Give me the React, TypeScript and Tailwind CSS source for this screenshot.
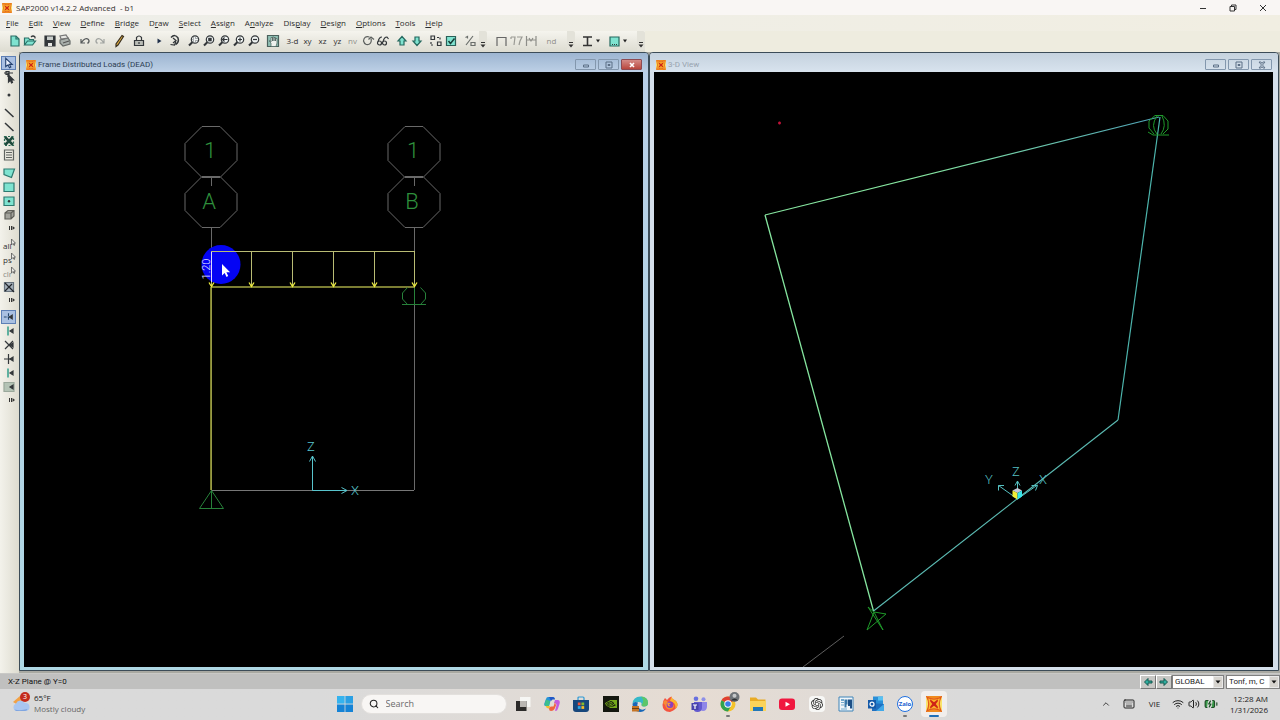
import type { ReactNode } from 'react'
import {
  BatteryCharging,
  ChevronUp,
  Keyboard,
  Search,
  Volume2,
  Wifi,
} from 'lucide-react'
import { SiNvidia, SiOpenai } from 'react-icons/si'
import { clsx } from 'clsx'

const INK = '#33373a'
const TEAL = '#2f9e8a'
const AQUA = '#7fe3d0'

function SapIcon({ className }: { className?: string }) {
  return (
    <svg viewBox="0 0 18 18" className={className} aria-hidden="true">
      <rect width="18" height="18" fill="#fae36a" />
      <path d="M0 0h18L12 3H6zM0 18h18l-6-3H6z" fill="#f08a1d" />
      <path d="M1 1Q9 6 17 1Q13 9 17 17Q9 12 1 17Q5 9 1 1Z" fill="#fbb52c" stroke="#e2581b" strokeWidth="1.3" />
      <path d="M5 4L9 7l4-3 .500 1.500L11 9l2.500 3.500L13 14l-4-3-4 3-.500-1.500L7 9 4.500 5.500z" fill="#cf2417" />
    </svg>
  )
}

function Glyph({ children }: { children: ReactNode }) {
  return (
    <svg viewBox="0 0 14 14" className="size-3.5" fill="none" stroke={INK} strokeWidth="1.2" aria-hidden="true">
      {children}
    </svg>
  )
}

function Lens({ children }: { children?: ReactNode }) {
  return (
    <Glyph>
      <circle cx="8" cy="5.5" r="3.7" fill="#eef2f1" />
      <path d="M5.3 8.2L2 11.5" strokeWidth="2" />
      {children}
    </Glyph>
  )
}

interface Tool {
  label: string
  icon?: ReactNode
  text?: string
  muted?: boolean
  active?: boolean
}

const FILE_TOOLS: Tool[][] = [
  [
    { label: 'New model', icon: <Glyph><path d="M3 2h5l3 3v7H3z" fill={AQUA} stroke="#2b6f66" /><path d="M8 2v3h3" stroke="#2b6f66" /></Glyph> },
    { label: 'Open', icon: <Glyph><path d="M1.5 11V4h4l1 1.500h4V7M1.500 11l3-4h8l-3 4z" fill={AQUA} stroke="#2b6f66" /><path d="M8 3q2-2 4 0v1.500" stroke={INK} /></Glyph> },
  ],
  [
    { label: 'Save', icon: <Glyph><path d="M2 2h10v10H2z" fill={INK} /><path d="M4 2.500h6V6H4z" fill="#c9cecb" stroke="none" /><path d="M5 9h4v3H5z" fill="#e8e8e4" stroke="none" /></Glyph> },
    { label: 'Print', icon: <Glyph><path d="M2 6l8-2 2 3v3l-7 2-3-3z" fill="#a9b0ac" stroke="#666b68" /><path d="M3 5l-1-3 6-1 2 3z" fill="#e8e8e4" stroke="#777" /><path d="M5 9l6-2" stroke="#555" /></Glyph> },
  ],
  [
    { label: 'Undo', icon: <Glyph><path d="M3 5v4h4M3.500 8.500Q7 3 10.500 5.500Q12 7.500 9.500 9.500" stroke="#55595a" /></Glyph> },
    { label: 'Redo', icon: <Glyph><path d="M11 5v4H7M10.500 8.500Q7 3 3.500 5.500Q2 7.500 4.500 9.500" stroke="#a0a3a0" /></Glyph> },
  ],
]

const EDIT_TOOLS: Tool[][] = [
  [{ label: 'Refresh window', icon: <Glyph><path d="M10 1.500l1.500 1L6 11l-2 1.500L4 10z" fill="#e8b33c" stroke="#3a3020" /></Glyph> }],
  [{ label: 'Lock model', icon: <Glyph><path d="M2.500 6.500h9v5h-9z" fill="#b9bcb6" /><path d="M4.500 6V3.500q2.500-3 5 0V6M7 8v2" /></Glyph> }],
  [
    { label: 'Run analysis', icon: <Glyph><path d="M5.500 4.500L9.500 7l-4 2.500z" fill="#20304a" stroke="none" /></Glyph> },
    { label: 'Run', icon: <Glyph><path d="M4 3.500Q8-.500 11 4Q12.500 8 8.500 10.500" strokeWidth="1.500" /><path d="M6 4l3 2.500L6 9M9 7.500L7.500 11l-4-.500" /></Glyph> },
  ],
  [
    { label: 'Rubber band zoom', icon: <Lens><path d="M6 4h4v3H6z" strokeWidth=".7" strokeDasharray="1 1" /></Lens> },
    { label: 'Restore full view', icon: <Lens><rect x="6.200" y="3.800" width="3.500" height="3.500" fill={INK} stroke="none" /></Lens> },
    { label: 'Restore previous zoom', icon: <Lens><path d="M5.500 5.500h5M7.500 3.500l-2 2 2 2" /></Lens> },
    { label: 'Zoom in', icon: <Lens><path d="M6 5.500h4M8 3.500v4" /></Lens> },
    { label: 'Zoom out', icon: <Lens><path d="M6 5.500h4" /></Lens> },
  ],
]

const PAN_TOOL: Tool[] = [
  { label: 'Pan', icon: <Glyph><path d="M1.500 1.500h11v11h-11z" fill="#8fc0b4" stroke="#4a615c" /><path d="M5 12.500V9L3 7l1-.500L5 8V3.500h1.500V7 3H8v4-3.500h1.500V7 4.500H11V9l-1 3.500z" fill="#eef2ee" stroke="#48605a" strokeWidth=".7" /></Glyph> },
]

const VIEW_TOOLS: Tool[] = [
  { label: '3-D view', text: '3-d' },
  { label: 'XY view', text: 'xy' },
  { label: 'XZ view', text: 'xz' },
  { label: 'YZ view', text: 'yz' },
  { label: 'Named view', text: 'nv', muted: true },
  { label: 'Rotate view', icon: <Glyph><path d="M8.500 3Q3 1.500 2.500 7Q4 12 8.500 10Q11 8 10 4.500M7.500 5.500L10 3l3 2.500" stroke="#5c605e" /></Glyph> },
  { label: 'Perspective toggle', icon: <Glyph><circle cx="3.500" cy="9" r="2" /><circle cx="8.500" cy="9" r="2" /><path d="M2 8Q3 3 6 3M7 8Q8 3 11 3l1.500 2" /></Glyph> },
]

const STEP_TOOLS: Tool[][] = [
  [
    { label: 'Move up in list', icon: <Glyph><path d="M7 2.500l4 4.500H9v4H5V7H3z" fill={AQUA} stroke="#24685e" /></Glyph> },
    { label: 'Move down in list', icon: <Glyph><path d="M7 11.500L3 7h2V3h4v4h2z" fill={AQUA} stroke="#24685e" /></Glyph> },
  ],
  [
    { label: 'Object shrink toggle', icon: <Glyph><path d="M2 2h3.500v3.500H2zM8.500 8H12v3.500H8.500z" /><path d="M8 3.500h3V6M2 8v3h3" strokeDasharray="2 1" /></Glyph> },
    { label: 'Display options', icon: <Glyph><path d="M2.500 2.500h9v9h-9z" fill={AQUA} stroke="#2a6058" /><path d="M4.500 7l2 2.500 4-5" stroke="#173e38" strokeWidth="1.500" /></Glyph> },
  ],
  [{ label: 'Assign to group', icon: <Glyph><path d="M3 11L10 2M2.500 3.500l2-1v2M8 8.500h4v3H8z" stroke="#6a6e6b" /></Glyph> }],
]

const DRAW_TOOLS: Tool[][] = [
  [
    { label: 'Pointer', active: true, icon: <Glyph><path d="M4 2v9l2.500-2 1.500 3 1.500-.700L8 8.500h3z" fill="#eef4ff" stroke="#23406e" /></Glyph> },
    { label: 'Reshape object', icon: <Glyph><path d="M2 3h9M6 3v4M4 1.500h3v3H4z" /><path d="M6.500 5v7l2-2 1 3 1-.500-1-2.500h2z" fill={INK} /></Glyph> },
  ],
  [{ label: 'Draw special joint', icon: <Glyph><circle cx="7" cy="7" r="1.500" fill={INK} stroke="none" /></Glyph> }],
  [
    { label: 'Draw frame', icon: <Glyph><path d="M3 3l8.500 8" strokeWidth="1.500" /></Glyph> },
    { label: 'Quick draw frame', icon: <Glyph><path d="M3 3l8.500 8" strokeWidth="1.500" /></Glyph> },
    { label: 'Quick draw braces', icon: <Glyph><path d="M3 3l8 8M11 3l-8 8" stroke="#1f4a3c" strokeWidth="2.500" /><path d="M2.500 2.500h9v9h-9z" strokeDasharray="2 1.500" stroke="#2c6a55" /></Glyph> },
    { label: 'Quick draw secondary beams', icon: <Glyph><path d="M2.500 2h9v10h-9zM4 4.500h6M4 7h6M4 9.500h6" stroke="#606460" /></Glyph> },
  ],
  [
    { label: 'Draw poly area', icon: <Glyph><path d="M2 3h10.500L9.500 11.500 2 8.500z" fill={AQUA} stroke="#2d7a70" /></Glyph> },
    { label: 'Draw rectangular area', icon: <Glyph><path d="M2 3h10v8.500H2z" fill={AQUA} stroke="#2d7a70" /></Glyph> },
    { label: 'Quick draw area', icon: <Glyph><path d="M2 3h10v8.500H2z" fill={AQUA} stroke="#2d7a70" /><circle cx="7" cy="7.200" r="1.200" fill={INK} stroke="none" /></Glyph> },
    { label: 'Quick draw solid', icon: <Glyph><path d="M3 5l3-2.500h6V8l-3 3H3zM3 5h6v6M9 5l3-2.500" fill="#a3a39c" stroke="#5f5f59" /></Glyph> },
  ],
]

const PickArrow = <path d="M9.500 1v6l1.500-1.500 1 2 .800-.500-.800-1.800h1.500z" fill="#e8e8e4" stroke="#555" strokeWidth=".8" />

const SELECT_TOOLS: Tool[] = [
  { label: 'Select all', icon: <Glyph>{PickArrow}</Glyph>, text: 'all' },
  { label: 'Previous selection', icon: <Glyph>{PickArrow}</Glyph>, text: 'ps' },
  { label: 'Clear selection', icon: <Glyph>{PickArrow}</Glyph>, text: 'clr', muted: true },
  { label: 'Intersecting line select', icon: <Glyph><path d="M2.500 2.500h9v9h-9z" fill="#a5b0ba" stroke="#67727c" /><path d="M3 3l9 9M3 11l7-7" stroke="#22262c" /></Glyph> },
]

const Node = <path d="M8 7l3-2v4z" fill={INK} stroke={INK} />

const SNAP_TOOLS: Tool[] = [
  { label: 'Snap to points', active: true, icon: <Glyph><path d="M2 7h7M7 3v8" stroke="#27486f" strokeDasharray="3 1" />{Node}</Glyph> },
  { label: 'Snap to ends', icon: <Glyph><path d="M6 2.500v9" stroke={TEAL} strokeWidth="1.500" />{Node}</Glyph> },
  { label: 'Snap to intersections', icon: <Glyph><path d="M3 3l8 8M11 3l-8 8" />{Node}</Glyph> },
  { label: 'Snap to perpendicular', icon: <Glyph><path d="M6.500 2v10M2 7h8" />{Node}</Glyph> },
  { label: 'Snap to lines', icon: <Glyph><path d="M6 2.500v9" stroke={TEAL} strokeWidth="1.500" />{Node}</Glyph> },
  { label: 'Snap to fine grid', icon: <Glyph><path d="M2 2.500h10v9H2z" fill="#b4c3b5" stroke="#9aa89b" />{Node}</Glyph> },
]

const MENUS = ['File', 'Edit', 'View', 'Define', 'Bridge', 'Draw', 'Select', 'Assign', 'Analyze', 'Display', 'Design', 'Options', 'Tools', 'Help']

// menus whose access key is not the first letter
const ACCESS_KEY: Record<string, number> = { Draw: 1, Analyze: 1, Display: 3 }

function ToolButton({ tool }: { tool: Tool }) {
  return (
    <button
      type="button"
      aria-label={tool.label}
      className={clsx(
        'flex h-3.5 w-[15px] items-center justify-center whitespace-nowrap text-[8px] leading-none',
        tool.muted ? 'text-[#8d8d88]' : 'text-[#303030]',
      )}
    >
      {tool.icon ?? tool.text}
    </button>
  )
}

function ToolGroup({ tools, className }: { tools: Tool[]; className?: string }) {
  return (
    <div className={clsx('flex', className)}>
      {tools.map((tool) => <ToolButton key={tool.label} tool={tool} />)}
    </div>
  )
}

function SideButton({ tool }: { tool: Tool }) {
  return (
    <button
      type="button"
      aria-label={tool.label}
      className={clsx(
        'relative flex h-3.5 w-[15px] items-center justify-center text-[8px] leading-none',
        tool.active && 'border border-[#5d7fb5] bg-[#a9c0e2]',
        tool.muted ? 'text-[#8d8d88]' : 'text-[#303030]',
      )}
    >
      {tool.text && <span className="absolute bottom-0.5 left-0.5">{tool.text}</span>}
      {tool.icon}
    </button>
  )
}

function SideGroup({ tools }: { tools: Tool[] }) {
  return (
    <div className="flex flex-col">
      {tools.map((tool) => <SideButton key={tool.label} tool={tool} />)}
    </div>
  )
}

function Overflow({ side }: { side?: boolean }) {
  return (
    <button
      type="button"
      aria-label="Toolbar options"
      className={clsx('flex w-2 shrink-0', side ? 'my-px h-2.5 items-center self-end' : 'h-[19px] items-end justify-center rounded-r-[2px] bg-[#e3e2d9] pb-0.5')}
    >
      <svg viewBox="0 0 6 6" className="size-1.5" aria-hidden="true">
        <path d={side ? 'M0 1h1v4H0zM2 1h1v4H2zM3.500 1L6 3 3.500 5z' : 'M1 0h4v1H1zM.500 2.500h5L3 5.500z'} fill="#333" />
      </svg>
    </button>
  )
}

function DropArrow({ label }: { label: string }) {
  return (
    <button type="button" aria-label={label} className="flex h-3.5 w-2 items-center justify-center">
      <svg viewBox="0 0 6 4" className="h-1 w-1.5" aria-hidden="true"><path d="M1 .500h4L3 3.500z" fill="#222" /></svg>
    </button>
  )
}

function TitleBar() {
  return (
    <header className="flex h-[15px] items-center bg-[#f9f6f4] pl-0.5 text-[#33302e]">
      <SapIcon className="mr-1 size-2.5" />
      <h1 className="flex-1 whitespace-pre text-[8px] leading-none">SAP2000 v14.2.2 Advanced  - b1</h1>
      <div className="flex gap-4 pr-2.5">
        <button type="button" aria-label="Minimize" className="flex w-3.5 justify-center">
          <svg viewBox="0 0 10 10" className="size-2.5" stroke="#333"><path d="M2 5.500h6" /></svg>
        </button>
        <button type="button" aria-label="Restore" className="flex w-3.5 justify-center">
          <svg viewBox="0 0 10 10" className="size-2.5" stroke="#333" fill="none"><path d="M2 3.500h4.500V8H2zM3.500 3.500V2H8v4.500H6.500" /></svg>
        </button>
        <button type="button" aria-label="Close" className="flex w-3.5 justify-center">
          <svg viewBox="0 0 10 10" className="size-2.5" stroke="#333"><path d="M2 2l6 6M8 2l-6 6" /></svg>
        </button>
      </div>
    </header>
  )
}

function MenuBar() {
  return (
    <nav className="flex h-4 items-center bg-linear-to-r from-[#eeeee9] to-[#f1eee2] pl-px">
      {MENUS.map((menu) => {
        const key = ACCESS_KEY[menu] ?? 0
        return (
          <button key={menu} type="button" className="px-[5px] text-[8px] leading-none text-[#2c2c2c]">
            {menu.slice(0, key)}
            <span className="underline">{menu[key]}</span>
            {menu.slice(key + 1)}
          </button>
        )
      })}
    </nav>
  )
}

function Toolbar() {
  return (
    <div className="bg-[#eeecdf]">
      <div className="flex h-[21px] w-fit items-center bg-linear-to-b from-[#f5f4ee] to-[#dddcd1] pb-0.5 pl-[7px]">
        <div className="flex gap-[5px]">
          {FILE_TOOLS.map((tools, i) => <ToolGroup key={i} tools={tools} />)}
        </div>
        <div className="ml-1 flex gap-[5px]">
          {EDIT_TOOLS.map((tools, i) => <ToolGroup key={i} tools={tools} />)}
        </div>
        <ToolGroup tools={PAN_TOOL} className="ml-1" />
        <ToolGroup tools={VIEW_TOOLS} className="ml-[5px]" />
        <div className="ml-1 flex gap-1">
          {STEP_TOOLS.map((tools, i) => <ToolGroup key={i} tools={tools} />)}
        </div>
        <div className="mx-0.5 self-end"><Overflow /></div>
        <div className="ml-1 flex">
          <ToolButton tool={{ label: 'Frame shape', icon: <Glyph><path d="M3 12V3.500h9V12" stroke="#666" /></Glyph> }} />
          <ToolButton tool={{ label: 'Frame forces', icon: <Glyph><path d="M2 3h4l-1 8M8 3h5l-2 4-1 4M2 3v2" stroke="#9a9a94" /></Glyph> }} />
          <ToolButton tool={{ label: 'Member diagram', icon: <Glyph><path d="M2.500 2v10M12 2v10M2.500 6h9.500M5 4l2 3 2-3" stroke="#8d8d88" /></Glyph> }} />
        </div>
        <div className="ml-1.5"><ToolButton tool={{ label: 'Named display', text: 'nd', muted: true }} /></div>
        <div className="ml-2 self-end"><Overflow /></div>
        <div className="ml-1 flex">
          <ToolButton tool={{ label: 'Frame section', icon: <Glyph><path d="M3 3h9M3 11.500h9M7.500 3v8.500" stroke="#333" strokeWidth="1.600" /></Glyph> }} />
          <DropArrow label="Frame sections" />
        </div>
        <div className="ml-1 flex">
          <ToolButton tool={{ label: 'Area section', icon: <Glyph><path d="M3 3h9v9H3z" fill={AQUA} stroke="#24685e" /><path d="M5 10.500h5" strokeDasharray="1 1" /></Glyph> }} />
          <DropArrow label="Area sections" />
        </div>
        <div className="ml-2 self-end"><Overflow /></div>
      </div>
    </div>
  )
}

function SideBar() {
  return (
    <aside className="flex w-[19px] shrink-0 flex-col items-center bg-linear-to-r from-[#f3f2eb] to-[#dedcd0] pt-1 pr-0.5">
      <div className="flex flex-col gap-1">
        {DRAW_TOOLS.map((tools, i) => <SideGroup key={i} tools={tools} />)}
      </div>
      <Overflow side />
      <div className="mt-1"><SideGroup tools={SELECT_TOOLS} /></div>
      <Overflow side />
      <div className="mt-1"><SideGroup tools={SNAP_TOOLS} /></div>
      <Overflow side />
    </aside>
  )
}

function Caption({ label, close, children }: { label: string; close?: boolean; children: ReactNode }) {
  return (
    <button
      type="button"
      aria-label={label}
      className={clsx(
        'flex h-[11px] w-[21px] items-center justify-center rounded-[1px] border',
        close ? 'border-[#8e4a52] bg-linear-to-b from-[#d48a86] to-[#b8453d] text-white' : 'border-[#8397ad] text-[#5b6e85]',
      )}
    >
      <svg viewBox="0 0 8 8" className="size-2" fill="none" stroke="currentColor" aria-hidden="true">{children}</svg>
    </button>
  )
}

function ModelWindow({ title, active, children }: { title: string; active?: boolean; children: ReactNode }) {
  return (
    <section
      className={clsx(
        'flex min-w-0 flex-1 flex-col rounded-t-[4px] border border-[#3c4c58] pr-[5px] pb-[3px] pl-1',
        active ? 'bg-linear-to-b from-[#b9cfe8] to-[#aed8e4]' : 'bg-[#d5e0eb]',
      )}
    >
      <div
        className={clsx(
          '-mr-[5px] -ml-1 flex h-[19px] items-center gap-0.5 rounded-t-[3px] pt-1 pr-1.5 pl-1.5',
          active ? 'bg-linear-to-b from-[#9db5d1] to-[#bdd0e6]' : 'bg-linear-to-b from-[#c5d2de] to-[#d8e3ee]',
        )}
      >
        <SapIcon className="size-2.5" />
        <h2 className={clsx("flex-1 font-['Roboto',sans-serif] text-[8px] leading-none", active ? 'text-[#2d3d52]' : 'text-[#98a3af]')}>{title}</h2>
        <Caption label={`Minimize ${title}`}><path d="M1.500 4h5v2h-5z" /></Caption>
        <Caption label={`Maximize ${title}`}><path d="M1 1h6v6H1zM3 3.500h2v1H3z" /></Caption>
        <Caption label={`Close ${title}`} close={active}>
          {active ? <path d="M2 2l4 4M6 2L2 6" strokeWidth="1.600" /> : <path d="M1 1l2.500 3L1 7h2l1-1.500L5 7h2L4.500 4 7 1H5L4 2.500 3 1z" strokeWidth=".9" />}
        </Caption>
      </div>
      <div className="flex min-h-0 flex-1 bg-black">{children}</div>
    </section>
  )
}

const OCTAGON = 'M-9-25.500H9L26-8.500V8.500L9 25.500H-9L-26 8.500V-8.500Z'

const GRID_LINES = [
  { x: 211, name: 'A' },
  { x: 414, name: 'B' },
]

const LOAD_ARROWS = [211.5, 251.5, 292.5, 333.5, 374.5, 414.5]

function ElevationView() {
  return (
    <svg viewBox="24 72 619 595" className="h-full w-full" fill="none" fontFamily="Roboto, sans-serif" fontWeight="300" textAnchor="middle">
      {GRID_LINES.map(({ x, name }) => (
        <g key={name} stroke="#696969">
          <path d={OCTAGON} transform={`translate(${x} 152)`} />
          <path d={OCTAGON} transform={`translate(${x} 202)`} />
          <path d={`M${x}.5 177v9M${x}.5 228V490`} />
          <g stroke="none" fill="#2f8f3c" fontSize="22">
            <text x={x - 1} y="158">1</text>
            <text x={x - 2} y="209">{name}</text>
          </g>
        </g>
      ))}
      <path d="M211 490.500H414" stroke="#777" />

      <circle cx="221" cy="264.500" r="19.500" fill="#0404f4" />

      <g stroke="#b9bc74">
        <path d="M211 251.500H414" />
        <path d="M211 287H414" stroke="#a4a744" strokeWidth="1.500" />
        <path d="M211 287V490" stroke="#a9ad3c" strokeWidth="1.500" />
        {LOAD_ARROWS.map((x) => (
          <g key={x}>
            <path d={`M${x} 251V286`} />
            <path d={`M${x - 2.5} 282.500L${x} 286.500L${x + 2.5} 282.500`} stroke="#eded3c" strokeWidth="1.300" />
          </g>
        ))}
      </g>
      <path d="M211.500 252V282" stroke="#dcdcff" />
      <text transform="translate(210 269) rotate(-90)" fontSize="11" fill="#e4e4ff">1.20</text>

      <g stroke="#27813a">
        <path d="M211.500 490.500L199.500 508.500H223.500L211.500 490.500V508" />
        <path d="M407.500 287.500L402.500 293V299L407.500 304.500M420.500 287.500L425.500 293V299L420.500 304.500M402 304.500H426M414.500 288V304" />
      </g>

      <g stroke="#58c4cc">
        <path d="M312.500 490.500V456M309.500 461.500L312.500 456L315.500 461.500" />
        <path d="M312.500 490.500H347M341.500 487.500L347 490.500L341.500 493.500" />
      </g>
      <g fill="#58c4cc" fontSize="13">
        <text x="311" y="451">Z</text>
        <text x="355" y="495">X</text>
      </g>

      <path d="M222 264v11.500l2.700-2.600 1.800 4 1.700-.800-1.800-3.900h3.700z" fill="#fff" />
    </svg>
  )
}

function ThreeDView() {
  return (
    <svg viewBox="654 72 619 595" className="h-full w-full" fill="none" fontFamily="Roboto, sans-serif" fontWeight="300" textAnchor="middle">
      <defs>
        <linearGradient id="beam" gradientUnits="userSpaceOnUse" x1="765" y1="215" x2="1159" y2="117">
          <stop offset="0.400" stopColor="#86e6a0" />
          <stop offset="1" stopColor="#4fa3b8" />
        </linearGradient>
      </defs>
      <path d="M765 215L1159 117" stroke="url(#beam)" strokeWidth="1.200" />
      <path d="M765 215L873.500 611" stroke="#86e6a0" strokeWidth="1.300" />
      <path d="M1160 117L1118 420" stroke="#4db5ad" strokeWidth="1.200" />
      <path d="M1118 420L873.500 611" stroke="#5cbcb4" strokeWidth="1.100" />
      <path d="M844 636L803 667" stroke="#5e5e5e" />
      <path d="M778 123h3M779.500 121.500v3" stroke="#c01238" strokeWidth="1.500" />

      <g stroke="#1f9a2a">
        <path d="M1155 115.500H1163L1168 121V129L1163 134M1155 115.500L1149 121V128L1154 134M1148 132L1153 135H1163L1169 135" />
        <path d="M1157 116Q1150 126 1157 134M1162 116Q1167 126 1161 134" />
        <path d="M868 607L883 630L874 612L867 630L886 614L874 612L868 607" />
      </g>

      <g stroke="#55bfc0">
        <path d="M1017.500 499L998.500 485.500M998.500 490.500V485.500H1004" />
        <path d="M1017.500 492V481M1015 485.500L1017.500 481L1020 485.500" />
        <path d="M1017.500 499L1037.500 485M1031.500 485.500H1037.500L1035.500 490.500" />
      </g>
      <path d="M1017.500 488l4.500 2.500-4.500 2.500-5-2.500z" fill="#c7c9d6" />
      <path d="M1012.500 490.500l5 2.500v6.500l-5-3z" fill="#f2ee35" />
      <path d="M1022 490.500l-4.500 2.500v6.500l4.500-3z" fill="#35e4e8" />
      <g fill="#55bfc0" fontSize="13">
        <text x="989" y="484">Y</text>
        <text x="1016" y="476">Z</text>
        <text x="1043" y="484">X</text>
      </g>
    </svg>
  )
}

function StatusSelect({ label, value, className }: { label: string; value: string; className: string }) {
  return (
    <div className={clsx('relative flex h-3.5 border border-[#808080] bg-white', className)}>
      <select
        aria-label={label}
        defaultValue={value}
        className="w-full appearance-none pl-0.5 text-[8px] leading-3 text-[#222] outline-none"
      >
        <option>{value}</option>
      </select>
      <span className="pointer-events-none absolute inset-y-0 right-0 flex w-2.5 items-center justify-center border border-[#e9e9e9] bg-[#d6d3ce]">
        <svg viewBox="0 0 6 4" className="h-1 w-1.5"><path d="M.500.500h5L3 3.500z" fill="#111" /></svg>
      </span>
    </div>
  )
}

function StatusBar() {
  return (
    <div className="flex h-4 items-center border-t border-[#c9c9c6] bg-[#c0c0bf] pl-2 font-['Roboto',sans-serif] text-[8px] leading-none text-[#111]">
      <p className="flex-1">X-Z Plane @ Y=0</p>
      {['M1.500 5L5 1.500V4h4v2H5v2.500z', 'M8.500 5L5 1.500V4H1v2h4v2.500z'].map((d, i) => (
        <button
          key={d}
          type="button"
          aria-label={i ? 'Next step' : 'Previous step'}
          className="flex h-3.5 w-4 items-center justify-center border border-t-white border-r-[#777] border-b-[#777] border-l-white bg-[#c8c8c5]"
        >
          <svg viewBox="0 0 10 10" className="size-2.5"><path d={d} fill="#2fae9f" stroke="#14574f" /></svg>
        </button>
      ))}
      <StatusSelect label="Coordinate system" value="GLOBAL" className="w-[52px]" />
      <StatusSelect label="Units" value="Tonf, m, C" className="ml-0.5 w-[54px]" />
    </div>
  )
}

interface TaskApp {
  name: string
  icon: ReactNode
  running?: boolean
  active?: boolean
}

function AppSvg({ children }: { children: ReactNode }) {
  return <svg viewBox="0 0 16 16" className="size-4" aria-hidden="true">{children}</svg>
}

const TASK_APPS: TaskApp[] = [
  { name: 'Task view', icon: <AppSvg><path d="M5 1h10.500v10H5z" fill="#f6f6f4" /><path d="M1 5h10.500v10H1z" fill="#2b2a29" /><path d="M5 5h6.500v6H5z" fill="#b9b6b2" /></AppSvg> },
  {
    name: 'Copilot',
    icon: (
      <AppSvg>
        <path d="M4 1h5Q10.500 1 11 3l-2.500 0Q7 3 6.500 5L5 10H2Q-.500 10 .500 7L2 3Q2.500 1 4 1z" fill="#2794d8" />
        <path d="M5 1h4Q10.500 1 11 3.500H8.500L7 5z" fill="#2357c6" />
        <path d="M1 7L2 3.500 6 5 5 10H2Q0 10 1 7z" fill="#3cbf8d" />
        <path d="M11 4h3Q16.500 4 15.500 8L14 12.500Q13.500 15 11 15L12.500 9Q12.500 7 10 7z" fill="#c35be0" />
        <path d="M12 9.500L10.500 13Q9.500 15 7 15Q5 15 5 12.500Q5 10.500 7.500 10.500H9.500L11 6z" fill="#f0633e" />
        <path d="M1.500 10H6l-1 2.500Q3 13 1.500 10z" fill="#f3bd2e" />
      </AppSvg>
    ),
  },
  {
    name: 'Microsoft Store',
    icon: (
      <AppSvg>
        <path d="M5 5V2q0-1 1-1h4q1 0 1 1v3" fill="none" stroke="#2f9ad6" strokeWidth="1.200" />
        <path d="M0 4h16v9q0 3-3 3H3q-3 0-3-3z" fill="#17477c" />
        <path d="M4.800 6.500h2.800v2.800H4.800z" fill="#f0553a" /><path d="M8.400 6.500h2.800v2.800H8.400z" fill="#86bc2c" />
        <path d="M4.800 10.100h2.800v2.800H4.800z" fill="#2ba8e8" /><path d="M8.400 10.100h2.800v2.800H8.400z" fill="#f8bd28" />
      </AppSvg>
    ),
  },
  { name: 'NVIDIA', icon: <span className="flex size-4 items-center justify-center bg-[#14170f]"><SiNvidia className="size-3 text-[#76a91c]" /></span> },
  {
    name: 'Microsoft Edge',
    icon: (
      <AppSvg>
        <path d="M.500 8Q1 .500 8.500.500T16 7q0 3.500-4 3.500Q9 10.500 9.500 8T5 6Q1.500 6 .500 8z" fill="#35b8c9" />
        <path d="M9 .500Q16 1 16 7q0 3.500-4 3.500-2 0-2.500-1.500Q13 5 9 .500z" fill="#5cc66a" />
        <path d="M.500 8Q2 5 6 6.500 4 10 8 13q3 1.500 6-.500-2 3.500-6 3.500Q.500 15.500.500 8z" fill="#1767b8" />
        <path d="M0 10h7v5.500H0z" fill="#c57526" /><path d="M0 12h7v1H0z" fill="#70400f" />
      </AppSvg>
    ),
  },
  {
    name: 'Firefox',
    icon: (
      <AppSvg>
        <path d="M3 2l2 2Q7 1 9.500.500q0 2 2 3Q15.500 5 15.500 9T8 16Q.500 15.500.500 9 .500 5 3 2z" fill="#f4533f" />
        <path d="M9.500.500q0 2 2 3Q15.500 5 15.500 9q-.500 2.500-2 4Q14 6 8 5z" fill="#fcb62d" />
        <path d="M1 7Q2 3 5 5l1 2 3 .500-2 2Q9 12 12 8.500 12 13.500 8 13.500T3 9z" fill="#f98a35" />
        <circle cx="8" cy="8.700" r="3.300" fill="#8a3fc0" />
        <path d="M5 6.500l4 .500-2 1.500 1.500 2L6 10z" fill="#fa9a38" />
      </AppSvg>
    ),
  },
  {
    name: 'Microsoft Teams',
    icon: (
      <AppSvg>
        <circle cx="5" cy="2.800" r="2.300" fill="#6870df" /><circle cx="12.500" cy="3.200" r="2" fill="#8d8fe8" />
        <path d="M9 6h7v5q-.500 4-4 4-3 0-3-3z" fill="#8f86e8" /><path d="M3 6h8v6q-.500 4-4.500 4T3 13z" fill="#6259cf" />
        <path d="M.500 7h7v7h-7z" fill="#4942ad" /><path d="M2 9h4M4 9v4" stroke="#fff" strokeWidth="1.200" />
      </AppSvg>
    ),
  },
  {
    name: 'Google Chrome',
    running: true,
    icon: (
      <svg viewBox="0 0 20 20" className="mb-1 ml-1 size-5" aria-hidden="true">
        <circle cx="8" cy="12" r="7.500" fill="#f4c22b" />
        <path d="M8 12L1.500 8.300A7.500 7.500 0 0 1 14.500 8.300z" fill="#df3f32" />
        <path d="M8 12L1.500 8.300A7.500 7.500 0 0 0 8 19.500l3.200-5.700z" fill="#2fa250" />
        <circle cx="8" cy="12" r="3.700" fill="#fff" /><circle cx="8" cy="12" r="2.800" fill="#3a7de8" />
        <circle cx="14.500" cy="5" r="5" fill="#6f7478" /><circle cx="14.500" cy="3.800" r="2" fill="#c6c8ca" /><path d="M11 8.500q3.500-4 7 0z" fill="#2d3134" />
      </svg>
    ),
  },
  { name: 'File Explorer', icon: <AppSvg><path d="M0 1.500h6l2 2h7.500v11H0z" fill="#e9ab25" /><path d="M0 5h16v10H0z" fill="#fbd35a" /><path d="M3 11h10v4H3z" fill="#2277b8" /></AppSvg> },
  { name: 'YouTube', icon: <AppSvg><rect y="2.500" width="16" height="11.500" rx="3" fill="#f0173f" /><path d="M6.500 5.700v5L11 8.200z" fill="#fff" /></AppSvg> },
  { name: 'ChatGPT', icon: <span className="flex size-4 items-center justify-center rounded-sm bg-[#f7f7f5]"><SiOpenai className="size-3 text-[#2b2b2b]" /></span> },
  {
    name: 'Structural editor',
    icon: <AppSvg><path d="M1 1h14v14H1z" fill="#f1f6fa" stroke="#3e84b8" /><path d="M3 3h3v2H3zM3 6h3v1H3zM3 8.500h3v1H3zM3 12.500h6v1H3z" fill="#73a9cd" /><path d="M6.500 3.500h3v5h-1v3h-2z" fill="#3a78aa" /><path d="M10 3.500h4v9h-2V10h-2z" fill="#1d4f85" /></AppSvg>,
  },
  {
    name: 'Outlook',
    icon: <AppSvg><path d="M5 .500h10v8H5z" fill="#2a8fd8" /><path d="M10 .500h5v4h-5z" fill="#58c1f2" /><path d="M4 7l12 1v7H4z" fill="#1f6fc0" /><path d="M16 8l-8 7h8z" fill="#41a8e8" /><path d="M0 4h8v8.500H0z" fill="#1459a8" /><circle cx="4" cy="8.200" r="2" fill="none" stroke="#fff" strokeWidth="1.200" /></AppSvg>,
  },
  {
    name: 'Zalo',
    running: true,
    icon: <span className="flex size-4 items-center justify-center rounded-full border border-[#1d6fe0] bg-white text-[6px] leading-none font-bold text-[#1d5fd0]">Zalo</span>,
  },
  { name: 'SAP2000', active: true, icon: <SapIcon className="size-4" /> },
]

function TaskBar() {
  return (
    <footer className="grid h-[31px] grid-cols-[1fr_auto_1fr] items-center bg-linear-to-r from-[#dadada] from-25% via-[#e6dcd3] via-55% to-[#dadada] to-75% pb-0.5">
      <button type="button" className="flex items-center gap-1 pb-0.5 pl-3 text-left">
        <span className="relative">
          <svg viewBox="0 0 18 18" className="size-[18px]" aria-hidden="true">
            <path d="M8 2L1 8l5 3 6-4z" fill="#f2a145" />
            <path d="M4 17a4 4 0 0 1 0-7.500 5 5 0 0 1 9-.500 4 4 0 0 1 1 8z" fill="#a9c6f0" />
            <path d="M2.500 15.500q6 1.500 13-.500-.500 2-2.500 2H4z" fill="#7fa5e0" />
          </svg>
          <span className="absolute -top-0.5 right-0 flex size-2.5 items-center justify-center rounded-full bg-[#c42b1c] text-[7px] leading-none text-white">3</span>
        </span>
        <span className="text-[8px] leading-[11px] text-[#222]">
          <span className="block">65°F</span>
          <span className="block text-[#666]">Mostly cloudy</span>
        </span>
      </button>

      <div className="flex items-center pl-1">
        <button type="button" aria-label="Start" className="mr-2">
          <svg viewBox="0 0 16 16" className="size-4" fill="#1583d6" aria-hidden="true">
            <path d="M0 0h7.600v7.600H0z" fill="#35b3ee" /><path d="M8.400 0H16v7.600H8.400z" fill="#2aa0e4" />
            <path d="M0 8.400h7.600V16H0zM8.400 8.400H16V16H8.400z" />
          </svg>
        </button>
        <div className="flex h-5 w-[146px] items-center rounded-full border border-[#e3e0dd] bg-[#f8f6f4] pl-[7px]">
          <Search className="size-2.5 shrink-0 text-[#222]" strokeWidth={2.5} />
          <input
            type="search"
            aria-label="Search"
            placeholder="Search"
            className="w-full min-w-0 bg-transparent pl-[7px] text-[9px] leading-4 outline-none placeholder:text-[#6b6b6b]"
          />
        </div>
        <div className="ml-[3px] flex w-[438px] justify-between">
          {TASK_APPS.map((app) => (
            <button
              key={app.name}
              type="button"
              aria-label={app.name}
              className={clsx('relative flex h-[26px] w-[26px] items-center justify-center rounded-sm', app.active && 'bg-[#f1eeec]')}
            >
              {app.icon}
              {app.running && <span className="absolute bottom-0 h-0.5 w-1 rounded-full bg-[#777]" />}
              {app.active && <span className="absolute bottom-0 h-0.5 w-2.5 rounded-full bg-[#1f6fb8]" />}
            </button>
          ))}
        </div>
      </div>

      <div className="flex items-center justify-end pr-3 text-[8px] text-[#222]">
        <button type="button" aria-label="Show hidden icons" className="mr-3"><ChevronUp className="size-2.5" /></button>
        <button type="button" aria-label="Touch keyboard" className="mr-3.5"><Keyboard className="size-3" /></button>
        <button type="button" className="mr-3 leading-none">VIE</button>
        <button type="button" aria-label="Network, volume and battery" className="mr-3 flex items-center gap-1">
          <Wifi className="size-3" />
          <Volume2 className="size-3" />
          <BatteryCharging className="size-3.5 fill-[#3c9c4c] text-[#1d4d26]" />
        </button>
        <button type="button" className="text-right leading-[11px]">
          <time className="block">12:28 AM</time>
          <time className="block">1/31/2026</time>
        </button>
      </div>
    </footer>
  )
}

export default function App() {
  return (
    <div className="flex h-screen flex-col overflow-hidden bg-[#f3f2ee] font-['Open_Sans','Noto_Sans',sans-serif]">
      <TitleBar />
      <MenuBar />
      <Toolbar />
      <div className="flex min-h-0 flex-1">
        <SideBar />
        <main className="flex min-w-0 flex-1 bg-[#a9a9a2] pr-px pb-0.5">
          <ModelWindow title="Frame Distributed Loads (DEAD)" active>
            <ElevationView />
          </ModelWindow>
          <ModelWindow title="3-D View">
            <ThreeDView />
          </ModelWindow>
        </main>
      </div>
      <StatusBar />
      <TaskBar />
    </div>
  )
}
